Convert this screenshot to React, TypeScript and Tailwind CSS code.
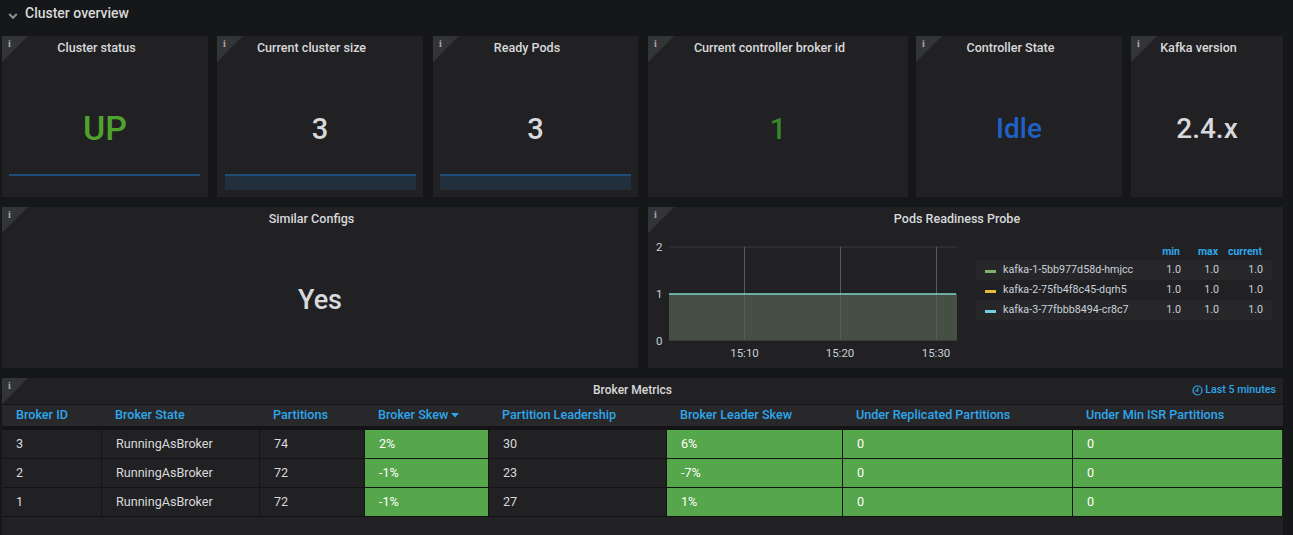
const Corner = () => (
  <div className="absolute left-0 top-0 h-[26px] w-[26px] bg-[#333438] [clip-path:polygon(0_0,100%_0,0_100%)]">
    <span className="absolute left-[6px] top-[2px] font-['Liberation_Serif',serif] text-[10px] font-bold leading-[12px] text-[#a9a9a9]">i</span>
  </div>
);

function Panel({ title, className = "", children }: { title: string; className?: string; children?: React.ReactNode }) {
  return (
    <div className={`relative flex flex-col bg-[#212124] ${className}`}>
      <Corner />
      <div className="h-[24px] pr-[17px] pt-[3px] text-center text-[12.55px] font-medium leading-[17px] text-[#d8d9da]">{title}</div>
      {children}
    </div>
  );
}

function Stat({ title, value, color, spark, className, valueClass = "", sparkClass = "" }: { title: string; value: string; color: string; spark?: "line" | "fill"; className: string; valueClass?: string; sparkClass?: string }) {
  return (
    <Panel title={title} className={className}>
      <div className={`flex h-[114px] items-center justify-center font-medium ${color} ${valueClass}`}>{value}</div>
      {spark && (
        <div className={`border-t-2 border-[#1f4e79] ${sparkClass} ${spark === "fill" ? "h-[16px] bg-[#22303e]" : "h-0"}`} />
      )}
    </Panel>
  );
}

const legend = [
  { name: "kafka-1-5bb977d58d-hmjcc", color: "bg-[#7eb26d]", row: "bg-[#27272a]" },
  { name: "kafka-2-75fb4f8c45-dqrh5", color: "bg-[#eab839]", row: "" },
  { name: "kafka-3-77fbbb8494-cr8c7", color: "bg-[#6ed0e0]", row: "bg-[#27272a]" },
];

function Chart() {
  const grid = "#3b3b3f";
  return (
    <svg width="310" height="136" viewBox="0 0 310 136" className="shrink-0">
      <rect x="21" y="63" width="288" height="46" fill="#464f43" />
      <line x1="21" x2="309" y1="16" y2="16" stroke={grid} />
      <line x1="21" x2="309" y1="109.5" y2="109.5" stroke={grid} />
      {[96.5, 192.5, 288.5].map((x) => (
        <line key={x} x1={x} x2={x} y1="16" y2="109" stroke="#595d59" />
      ))}
      <line x1="21" x2="308" y1="63" y2="63" stroke="#7fd3c4" strokeWidth="1.5" />
      <g fill="#c7d0d9" fontSize="11.5" fontFamily="Roboto, sans-serif">
        <text x="8" y="20">2</text>
        <text x="8" y="67">1</text>
        <text x="8" y="114">0</text>
        <text x="96.5" y="126" textAnchor="middle">15:10</text>
        <text x="192" y="126" textAnchor="middle">15:20</text>
        <text x="288" y="126" textAnchor="middle">15:30</text>
      </g>
    </svg>
  );
}

const cols = ["w-[100px]", "w-[158px]", "w-[105px]", "w-[124px]", "w-[178px]", "w-[176px]", "w-[230px]", "w-[209px]"];
const heads = ["Broker ID", "Broker State", "Partitions", "Broker Skew", "Partition Leadership", "Broker Leader Skew", "Under Replicated Partitions", "Under Min ISR Partitions"];
const rows = [
  ["3", "RunningAsBroker", "74", "2%", "30", "6%", "0", "0"],
  ["2", "RunningAsBroker", "72", "-1%", "23", "-7%", "0", "0"],
  ["1", "RunningAsBroker", "72", "-1%", "27", "1%", "0", "0"],
];
const green = [3, 5, 6, 7];

export default function App() {
  return (
    <div className="h-[535px] w-[1293px] overflow-hidden bg-[#161719] font-['Roboto',sans-serif]">
      <div className="flex h-[36px] items-start pl-[8px] pt-[4px] text-[14px] font-medium leading-[18px] text-[#d8d9da]">
        <svg width="10" height="18" viewBox="0 0 10 18" className="mr-[7px] mt-[2px]" fill="none" stroke="#8e8e8e" strokeWidth="2">
          <path d="M1.2 8 L5 11.8 L8.8 8" />
        </svg>
        Cluster overview
      </div>
      <div className="flex h-[161px] pl-[2px]">
        <Stat title="Cluster status" value="UP" color="text-[#4fa32d]" spark="line" sparkClass="ml-[7px] mr-[8px]" className="mr-[9px] w-[206px]" valueClass="pt-[22px] text-[34px]" />
        <Stat title="Current cluster size" value="3" color="text-[#d8d9da]" spark="fill" sparkClass="ml-[8px] mr-[7px]" className="mr-[10px] w-[206px]" valueClass="pt-[26px] text-[29px]" />
        <Stat title="Ready Pods" value="3" color="text-[#d8d9da]" spark="fill" sparkClass="mx-[7px]" className="mr-[10px] w-[205px]" valueClass="pt-[26px] text-[29px]" />
        <Stat title="Current controller broker id" value="1" color="text-[#37872d]" className="mr-[8px] w-[260px]" valueClass="pt-[26px] text-[29px]" />
        <Stat title="Controller State" value="Idle" color="text-[#1f60c4]" className="mr-[9px] w-[206px]" valueClass="pt-[24px] text-[28px]" />
        <Stat title="Kafka version" value="2.4.x" color="text-[#d8d9da]" className="w-[152px]" valueClass="pt-[24px] text-[28px]" />
      </div>
      <div className="mt-[10px] flex h-[161px] gap-[10px] pl-[2px]">
        <Panel title="Similar Configs" className="w-[636px]">
          <div className="flex h-[106px] items-center justify-center pt-[32px] text-[27px] font-medium text-[#d8d9da]">Yes</div>
        </Panel>
        <Panel title="Pods Readiness Probe" className="w-[635px]">
          <div className="flex">
            <Chart />
            <div className="ml-[18px] mt-[13px] w-[296px] text-[10.7px] leading-[20px] text-[#c7d0d9]">
              <div className="flex h-[16px] justify-end pr-[10px] text-[10.5px] font-bold leading-[16px] text-[#2ea6ea]">
                <span className="w-[38px] text-right">min</span>
                <span className="w-[38px] text-right">max</span>
                <span className="w-[44px] text-right">current</span>
              </div>
              {legend.map((l) => (
                <div key={l.name} className={`flex h-[20px] items-center pl-[9px] pr-[9px] ${l.row}`}>
                  <span className={`mr-[7px] mt-[2px] h-[3px] w-[11px] ${l.color}`} />
                  <span className="flex-1">{l.name}</span>
                  <span className="w-[38px] text-right">1.0</span>
                  <span className="w-[38px] text-right">1.0</span>
                  <span className="w-[44px] text-right">1.0</span>
                </div>
              ))}
            </div>
          </div>
        </Panel>
      </div>
      <div className="relative ml-[2px] mt-[10px] h-[157px] w-[1281px] bg-[#212124]">
        <Corner />
        <div className="relative flex h-[26px] items-center justify-center pb-[3px] pr-[20px] text-[12px] font-medium text-[#d8d9da]">
          Broker Metrics
          <div className="absolute right-[7px] top-[5px] flex items-center gap-[2px] text-[10.7px] font-medium leading-[14px] text-[#2ea6ea]">
            <svg width="11" height="11" viewBox="0 0 11 11" fill="none" stroke="#2ea6ea" strokeWidth="1.2">
              <circle cx="5.5" cy="5.5" r="4.5" />
              <path d="M5.8 2.8 V5.8 H3.3" />
            </svg>
            Last 5 minutes
          </div>
        </div>
        <div className="flex h-[22px] items-center border-t border-[#141416] bg-[#28282b] text-[12.6px] font-medium text-[#2ea6ea]">
          {heads.map((h, i) => (
            <div key={h} className={`${cols[i]} flex shrink-0 items-center ${i === 0 ? "pl-[14px]" : "pl-[13px]"}`}>
              {h}
              {i === 3 && (
                <svg width="8" height="5" viewBox="0 0 8 5" className="ml-[3px]">
                  <path d="M0 0 H8 L4 4.5 Z" fill="#2ea6ea" />
                </svg>
              )}
            </div>
          ))}
        </div>
        <div className="h-[4px] bg-[#141416]" />
        {rows.map((r) => (
          <div key={r[0]} className="flex h-[29px] border-b border-[#141416] text-[12.6px] text-[#d8d9da]">
            {r.map((c, i) => (
              <div
                key={i}
                className={`${cols[i]} flex shrink-0 items-center pl-[14px] ${i < 7 ? "border-r border-[#141416]" : ""} ${green.includes(i) ? "bg-[#56a64b] text-white" : ""}`}
              >
                {c}
              </div>
            ))}
          </div>
        ))}
      </div>
    </div>
  );
}
